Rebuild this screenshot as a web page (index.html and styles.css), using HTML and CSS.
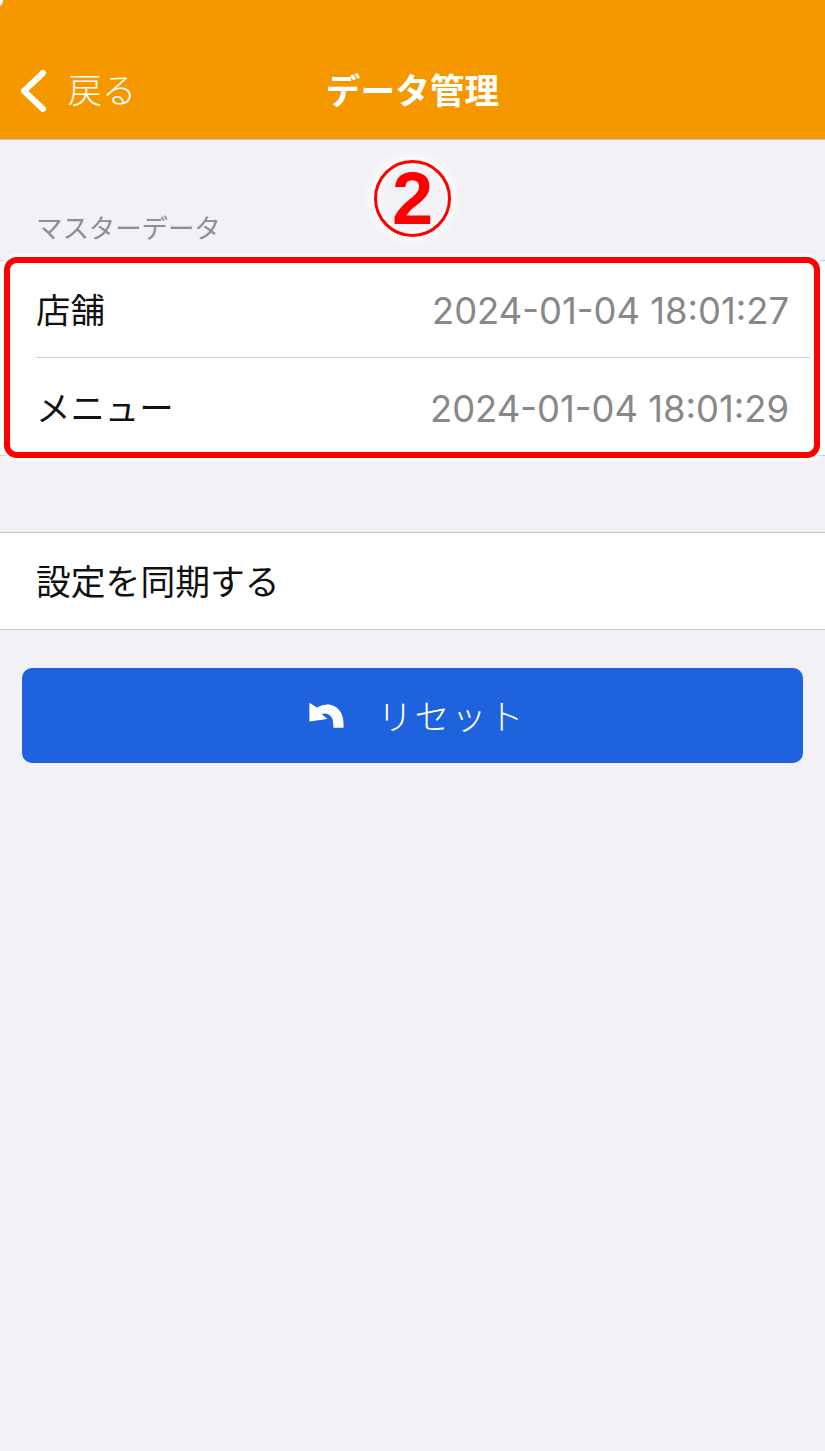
FILE: index.html
```html
<!DOCTYPE html>
<html lang="ja">
<head>
    <meta charset="UTF-8">
    <meta name="viewport" content="width=device-width, initial-scale=1.0">
    <title>データ管理</title>
    <link rel="stylesheet" href="styles.css">
</head>
<body>
    <header class="navbar">
        <div class="corner"></div>
        <div class="back">
            <svg class="back-icon" viewBox="0 0 28 44">
                <path d="M24 4 L5 22 L24 40" fill="none" stroke="#fff" stroke-width="6" stroke-linecap="round" stroke-linejoin="round"/>
            </svg>
            <span>戻る</span>
        </div>
        <h1>データ管理</h1>
    </header>

    <div class="section-title">マスターデータ</div>
    <div class="list master">
        <div class="row">
            <span>店舗</span>
            <span class="date">2024-01-04 18:01:27</span>
        </div>
        <div class="row">
            <span>メニュー</span>
            <span class="date">2024-01-04 18:01:29</span>
        </div>
        <div class="mark-box"></div>
    </div>
    <div class="mark-number"><span>2</span></div>

    <div class="list sync">
        <div class="row">
            <span>設定を同期する</span>
        </div>
    </div>

    <button class="reset">
        <svg class="reset-icon" viewBox="90 130 100 76">
            <path d="M90 132 L90 187 L143 180 L126 166 C135 160 150 165 157 178 C160 188 160 198 160 205 L190 205 C190 190 190 170 178 155 C165 138 140 130 112 146 Z" fill="#fff"/>
        </svg>
        <span>リセット</span>
    </button>
</body>
</html>
```

FILE: styles.css
```css
body {
    margin: 0;
    height: 1451px;
    overflow: hidden;
    position: relative;
    background: #f1f1f6;
    color: #111;
    font-family: Inter, "Noto Sans CJK JP", sans-serif;
}

.navbar {
    height: 139px;
    border-bottom: 1px solid #c6c6cc;
    background: #f59800;
    color: #fff;
    display: flex;
    align-items: flex-end;
    justify-content: center;
    position: relative;
    overflow: hidden;
}

.navbar h1 {
    margin: 0 0 24px;
    font-size: 34.7px;
    line-height: 48px;
    font-weight: 700;
}

.corner {
    position: absolute;
    left: -9px;
    top: -7px;
    width: 12px;
    height: 14px;
    border-radius: 50%;
    background: #fff;
}

.back {
    position: absolute;
    left: 19px;
    bottom: 24px;
    display: flex;
    align-items: center;
    gap: 21px;
    font-size: 34px;
    line-height: 48px;
    font-weight: 300;
}

.back-icon {
    width: 28px;
    height: 44px;
}

.section-title {
    margin: 70px 0 0 36px;
    height: 50px;
    font-size: 26.4px;
    line-height: 36px;
    color: #8e8e93;
}

.list {
    background: #fff;
    border-top: 1px solid #c8c8cc;
    border-bottom: 1px solid #c8c8cc;
    position: relative;
}

.master {
    height: 194px;
}

.row {
    height: 96px;
    margin-left: 36px;
    padding-right: 36px;
    box-sizing: border-box;
    display: flex;
    align-items: center;
    justify-content: space-between;
    font-size: 34.4px;
}

.master .row {
    margin-right: 15px;
    padding-right: 21px;
}

.master .row:first-child {
    height: 97px;
    padding-bottom: 2px;
    border-bottom: 1px solid #d0d0d4;
}

.master .row:last-child {
    height: 97px;
    padding-top: 2px;
}

.date {
    color: #888888;
    font-size: 36.4px;
    padding-top: 6px;
}

.sync {
    margin-top: 76px;
}

.sync .row {
    padding-bottom: 3px;
    font-size: 34.8px;
}

/* red annotation drawn on top of the screenshot */
.mark-box {
    position: absolute;
    left: 4px;
    right: 5px;
    top: -4px;
    bottom: -3px;
    border: 6px solid #ff0000;
    border-radius: 13px;
    box-shadow: 0 0 3px 3px #fff;
}

.mark-number {
    position: absolute;
    left: 374px;
    top: 160px;
    width: 71px;
    height: 71px;
    border: 3px solid #ff0000;
    border-radius: 50%;
    box-shadow: 0 0 12px 5px rgba(255, 255, 255, 0.9), inset 0 0 10px 3px rgba(255, 255, 255, 0.8);
    display: flex;
    align-items: center;
    justify-content: center;
    color: #ff0000;
    font-family: "Liberation Sans", sans-serif;
    font-size: 74px;
    font-weight: 700;
}

.reset {
    display: flex;
    align-items: center;
    justify-content: center;
    gap: 33px;
    width: 781px;
    height: 95px;
    margin: 38px 0 0 22px;
    padding: 0 0 2px 1px;
    border: none;
    border-radius: 10px;
    background: #1f62de;
    color: #fff;
    font-family: inherit;
    font-size: 35px;
    font-weight: 300;
    letter-spacing: 2px;
}

.reset-icon {
    width: 35px;
    height: 26px;
    margin: 0 0 0 9px;
}
```
